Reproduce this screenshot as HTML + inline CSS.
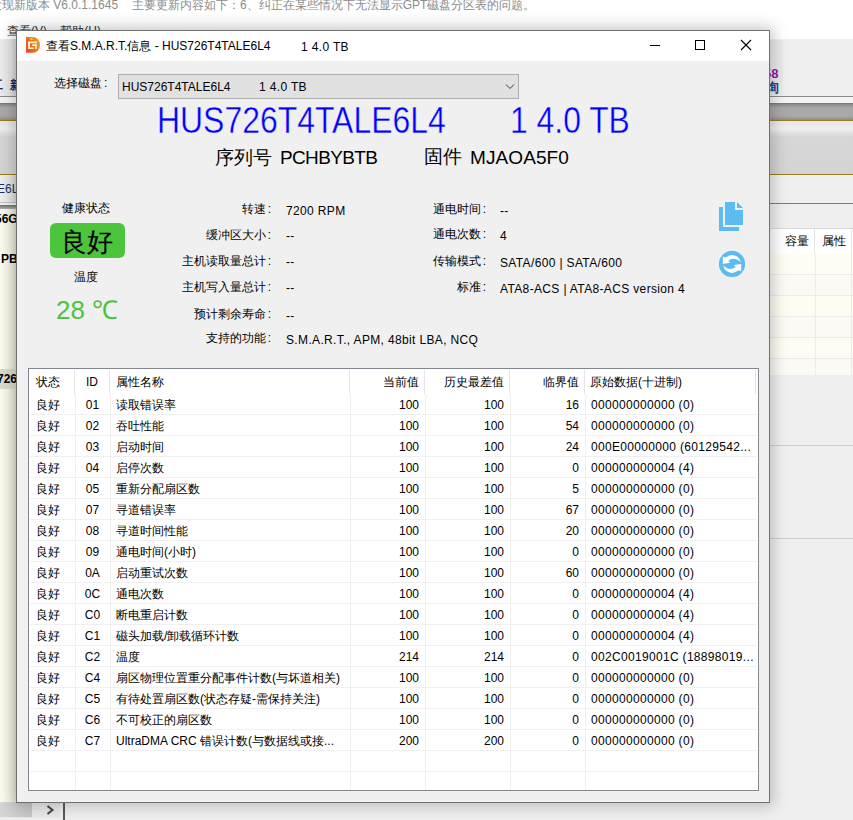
<!DOCTYPE html>
<html><head><meta charset="utf-8">
<style>
*{margin:0;padding:0;box-sizing:border-box}
html,body{width:853px;height:820px;overflow:hidden;background:#fff}
body{position:relative;font-family:"Liberation Sans",sans-serif;font-size:12px;color:#000}
.a{position:absolute}
.t{position:absolute;white-space:nowrap;line-height:1}
/* background window */
#topmsg,#topmsg2{top:-1px;color:#8c8c8c;font-size:12px}
#topgrad{left:0;top:12px;width:853px;height:27px;background:#fff}
#menu{left:7px;top:25px;font-size:12px;color:#333}
#tb{left:0;top:39px;width:853px;height:57px;background:#efefef}
.line{position:absolute;left:0;width:853px;height:1px}
#dialog{left:16px;top:30px;width:754px;height:773px;background:#f0f0f0;border:1px solid #6f6f6f;box-shadow:0 0 14px 3px rgba(0,0,0,0.22)}
#titlebar{left:0;top:0;width:752px;height:30px;background:#fff}
.L{letter-spacing:0.35px}
.co{margin-left:2px}
.lbl{position:absolute;white-space:nowrap;line-height:1;font-size:12px}
.r{position:absolute;left:0;width:729px;height:21px}
.r span{position:absolute;top:5px;white-space:nowrap;line-height:1}
.c0{left:7px}.c1{left:46px;width:35px;text-align:center}.c2{left:87px}
.c3{right:339px}.c4{right:254px}.c5{right:179px}.c6{left:562px;letter-spacing:0.32px}
.hl{position:absolute;left:1px;width:727px;height:1px;background:#f0f0f0}
.vl{position:absolute;width:1px;background:#f0f0f0}
.hs{position:absolute;top:1px;width:1px;height:24px;background:#e5e5e5}
.h span{position:absolute;top:7px;white-space:nowrap;line-height:1}
</style></head><body>

<!-- ===== background app ===== -->
<div class="a" id="topgrad"></div>
<div class="t" id="topmsg" style="left:-10px">发现新版本 V6.0.1.1645</div><div class="t" id="topmsg2" style="left:132px">主要更新内容如下：6、纠正在某些情况下无法显示GPT磁盘分区表的问题。</div>
<div class="t" id="menu">查看(V) &nbsp;&nbsp;&nbsp;帮助(H)</div>
<div class="a" id="tb"></div>
<div class="line" style="top:96px;background:#8a8a8a"></div>
<div class="a" style="left:0;top:97px;width:853px;height:6px;background:#f3f3f3"></div>
<div class="line" style="top:103px;background:#9a7d1e"></div>
<div class="a" style="left:0;top:104px;width:853px;height:16px;background:linear-gradient(#888,#a9a9a9 25%,#a9a9a9 75%,#8c8c8c)"></div>
<div class="line" style="top:120px;background:#9a7d1e"></div>
<div class="a" style="left:0;top:121px;width:853px;height:53px;background:linear-gradient(#e6e6e6,#f0f0f0 15%,#d6d6d6 30%,#d4d4d4)"></div>
<div class="line" style="top:174px;background:#9a7d1e"></div>
<div class="a" style="left:0;top:175px;width:853px;height:645px;background:#efefef"></div>
<div class="line" style="top:203px;background:#7a7a7a;height:1px"></div>
<!-- right list -->
<div class="line" style="top:228px;background:#dcdcdc"></div>
<div class="a" style="left:760px;top:229px;width:93px;height:25px;background:#fff"></div>
<div class="t" style="left:785px;top:235px">容量</div>
<div class="t" style="left:822px;top:235px">属性</div>
<div class="a" style="left:814px;top:229px;width:1px;height:25px;background:#e5e5e5"></div>
<div class="a" style="left:851px;top:229px;width:1px;height:25px;background:#e5e5e5"></div>
<div class="a" style="left:760px;top:254px;width:93px;height:21px;background:#fdfdf3"></div>
<div class="a" style="left:760px;top:275px;width:93px;height:21px;background:#fcfaf5"></div>
<div class="a" style="left:760px;top:296px;width:93px;height:21px;background:#fdfdf3"></div>
<div class="a" style="left:760px;top:317px;width:93px;height:21px;background:#fcfaf5"></div>
<div class="a" style="left:760px;top:338px;width:93px;height:21px;background:#fdfdf3"></div>
<div class="a" style="left:760px;top:359px;width:93px;height:16px;background:#fcfaf5"></div>
<div class="line" style="top:274px;left:760px;width:93px;background:#ececec"></div>
<div class="line" style="top:295px;left:760px;width:93px;background:#ececec"></div>
<div class="line" style="top:316px;left:760px;width:93px;background:#ececec"></div>
<div class="line" style="top:337px;left:760px;width:93px;background:#ececec"></div>
<div class="line" style="top:358px;left:760px;width:93px;background:#ececec"></div>
<div class="a" style="left:815px;top:254px;width:1px;height:121px;background:#ececec"></div>
<div class="a" style="left:851px;top:254px;width:1px;height:121px;background:#ececec"></div>
<div class="line" style="top:445px;background:#cfcfcf"></div>
<div class="line" style="top:538px;background:#cfcfcf"></div>
<!-- left panel -->
<div class="a" style="left:0;top:208px;width:16px;height:594px;background:linear-gradient(90deg,#fdfdf0,#f4f3e6 60%,#e4e2d4)"></div>

<!-- left strip details -->
<div class="a" style="left:0;top:39px;width:16px;height:57px;background:linear-gradient(90deg,#ececec,#e4e4e4 70%,#d4d4d4)"></div>
<div class="t" style="left:-9px;top:79px;font-weight:bold;color:#1c2a58;font-size:12px">工&nbsp;&nbsp;新</div>
<div class="a" style="left:0;top:175px;width:16px;height:27px;background:linear-gradient(90deg,#efefef,#e6e6e6 70%,#d8d8d8)"></div>
<div class="t" style="left:-3px;top:183px;color:#1e2e5a;font-size:12px">E6L4</div>
<div class="a" style="left:0;top:202px;width:16px;height:1px;background:#c4c4c4"></div>
<div class="a" style="left:0;top:203px;width:16px;height:2px;background:#f2f2f2"></div>
<div class="a" style="left:0;top:205px;width:16px;height:4px;background:linear-gradient(#6e6e6e,#b0b0b0)"></div>
<div class="t" style="left:-5px;top:213px;font-weight:bold;font-size:12px">56G</div>
<div class="t" style="left:1px;top:253px;font-weight:bold;font-size:12px">PB</div>
<div class="a" style="left:0;top:369px;width:16px;height:20px;background:#dedbcd"></div>
<div class="t" style="left:-3px;top:373px;font-weight:bold;font-size:12px">726</div>
<!-- bottom scrollbar -->
<div class="a" style="left:0;top:802px;width:60px;height:16px;background:#e8e8e8"></div>
<div class="a" style="left:0;top:802px;width:32px;height:15px;background:linear-gradient(90deg,#d6d6d6,#c6c6c6)"></div>
<svg class="a" style="left:46px;top:805px" width="9" height="10" viewBox="0 0 9 10"><path d="M1.5 1L6.5 5L1.5 9" stroke="#444" stroke-width="2" fill="none"/></svg>
<div class="a" style="left:63px;top:802px;width:2px;height:18px;background:#5a5a5a"></div>
<!-- right strip details -->
<div class="a" style="left:770px;top:40px;width:13px;height:55px;background:#e9e9e9"></div>
<div class="t" style="left:764px;top:67px;font-weight:bold;color:#9a0fb0;font-size:13px">58</div>
<div class="t" style="left:766px;top:81px;font-weight:bold;color:#14469a;font-size:13px">询</div>
<!-- ===== dialog ===== -->
<div class="a" id="dialog">
  <div class="a" id="titlebar"></div>
</div>


<!-- ===== dialog content (page coords) ===== -->
<!-- title -->
<svg class="a" style="left:26px;top:37px" width="15" height="16" viewBox="0 0 15 16">
 <defs><linearGradient id="ig" x1="1" y1="0" x2="0" y2="0.6"><stop offset="0" stop-color="#f9a51f"/><stop offset="1" stop-color="#ec4f1c"/></linearGradient></defs>
 <path d="M0 0H7A7 7.9 0 0 1 7 15.8H0Z" fill="url(#ig)"/>
 <circle cx="5.4" cy="1.9" r="1.2" fill="#ffd21a"/>
 <path d="M2.1 4.6H10.9V6.2H4V10.5H7.8V12.1H2.1Z" fill="#f6f7d9"/>
 <path d="M6.2 7.2H10.9V12.1H9.2V8.9H6.2Z" fill="#f6f7d9"/>
</svg>
<div class="t" style="left:46px;top:40px">查看S.M.A.R.T.信息 - HUS726T4TALE6L4</div>
<div class="t L" style="left:301px;top:41px">1 4.0 TB</div>
<div class="a" style="left:650px;top:45px;width:10px;height:1px;background:#000"></div>
<div class="a" style="left:695px;top:40px;width:10px;height:10px;border:1px solid #000"></div>
<svg class="a" style="left:740px;top:39px" width="12" height="12" viewBox="0 0 12 12"><path d="M1 1L11 11M11 1L1 11" stroke="#000" stroke-width="1.1"/></svg>

<div class="t" style="left:54px;top:77px">选择磁盘<span style="margin-left:2px">:</span></div>
<div class="a" style="left:118px;top:74px;width:401px;height:25px;background:#e1e1e1;border:1px solid #adadad"></div>
<div class="t" style="left:122px;top:81px">HUS726T4TALE6L4</div>
<div class="t L" style="left:259px;top:81px">1 4.0 TB</div>
<svg class="a" style="left:505px;top:83px" width="10" height="7" viewBox="0 0 10 7"><path d="M1 1.5L5 5.5L9 1.5" stroke="#3a3a3a" stroke-width="1" fill="none"/></svg>

<div class="t" id="big1" style="left:157px;top:103px;font-size:36px;color:#0000ff;-webkit-text-stroke:0.4px #f0f0f0;transform:scaleX(0.887);transform-origin:0 0">HUS726T4TALE6L4</div>
<div class="t" id="big2" style="left:510px;top:103px;font-size:36px;color:#0000ff;-webkit-text-stroke:0.4px #f0f0f0;transform:scaleX(0.885);transform-origin:0 0">1 4.0 TB</div>
<div class="t" style="left:215px;top:148px;font-size:19px">序列号</div>
<div class="t" style="left:280px;top:148px;font-size:19px;letter-spacing:-0.65px">PCHBYBTB</div>
<div class="t" style="left:424px;top:147px;font-size:19px">固件</div>
<div class="t" id="fw" style="left:470px;top:148px;font-size:19px;letter-spacing:0.1px">MJAOA5F0</div>

<!-- health -->
<div class="t" style="left:62px;top:202px">健康状态</div>
<div class="a" style="left:50px;top:223px;width:75px;height:35px;background:#4cc43c;border-radius:6px"></div>
<div class="t" style="left:61px;top:229px;font-size:26px;-webkit-text-stroke:0.15px #000">良好</div>
<div class="t" style="left:74px;top:271px">温度</div>
<div class="t" id="temp" style="left:56px;top:297px;font-size:26px;color:#4cc43c">28 ℃</div>

<!-- info labels -->
<div class="t" style="right:582px;top:203px">转速<span class="co">:</span></div>
<div class="t" style="right:582px;top:229px">缓冲区大小<span class="co">:</span></div>
<div class="t" style="right:582px;top:255px">主机读取量总计<span class="co">:</span></div>
<div class="t" style="right:582px;top:281px">主机写入量总计<span class="co">:</span></div>
<div class="t" style="right:582px;top:308px">预计剩余寿命<span class="co">:</span></div>
<div class="t" style="right:582px;top:332px">支持的功能<span class="co">:</span></div>
<div class="t L" style="left:286px;top:205px">7200 RPM</div>
<div class="t L" style="left:286px;top:230px">--</div>
<div class="t L" style="left:286px;top:256px">--</div>
<div class="t L" style="left:286px;top:282px">--</div>
<div class="t L" style="left:286px;top:310px">--</div>
<div class="t L" style="left:286px;top:334px">S.M.A.R.T., APM, 48bit LBA, NCQ</div>

<div class="t" style="right:367px;top:203px">通电时间<span class="co">:</span></div>
<div class="t" style="right:367px;top:228px">通电次数<span class="co">:</span></div>
<div class="t" style="right:367px;top:255px">传输模式<span class="co">:</span></div>
<div class="t" style="right:367px;top:281px">标准<span class="co">:</span></div>
<div class="t L" style="left:500px;top:205px">--</div>
<div class="t L" style="left:500px;top:230px">4</div>
<div class="t L" style="left:500px;top:257px">SATA/600 | SATA/600</div>
<div class="t L" style="left:500px;top:283px">ATA8-ACS | ATA8-ACS version 4</div>

<!-- icons -->
<svg class="a" style="left:719px;top:201px" width="25" height="31" viewBox="0 0 25 31">
 <path d="M0 6H4V26H20V30H0Z" fill="#5cbcf2"/>
 <path d="M6 1H16V9H24V24H6Z" fill="#5cbcf2"/>
 <path d="M18 1L24 7H18Z" fill="#5cbcf2"/>
</svg>
<svg class="a" style="left:718px;top:250px" width="28" height="28" viewBox="0 0 28 28">
 <circle cx="14" cy="13.9" r="13.1" fill="#5cbcf2"/>
 <path id="up" d="M22.8 12.6A8.9 8.9 0 0 0 7.7 7.6L4.8 6.5L4.8 13.9L12 12.8L10.3 10.5Q17 6.4 22.8 12.6Z" fill="#fff"/>
 <path d="M5.2 15.2A8.9 8.9 0 0 0 20.3 20.2L23.2 21.3L23.2 13.9L16 15L17.7 17.3Q11 21.4 5.2 15.2Z" fill="#fff"/>
</svg>

<!-- table -->
<div class="a" id="table" style="left:28px;top:368px;width:731px;height:423px;background:#fff;border:1px solid #828790">
 <div class="a h" style="left:0;top:0;width:729px;height:25px">
  <span style="left:7px">状态</span><span style="left:57px">ID</span><span style="left:87px">属性名称</span>
  <span style="right:339px">当前值</span><span style="right:254px">历史最差值</span><span style="right:179px">临界值</span><span style="left:561px">原始数据(十进制)</span>
 </div>
 <div class="hs" style="left:45px"></div><div class="hs" style="left:80px"></div><div class="hs" style="left:320px"></div>
 <div class="hs" style="left:395px"></div><div class="hs" style="left:480px"></div><div class="hs" style="left:555px"></div><div class="hs" style="left:726px"></div>
 <div class="vl" style="left:46px;top:25px;height:396px"></div>
 <div class="vl" style="left:81px;top:25px;height:396px"></div>
 <div class="vl" style="left:321px;top:25px;height:396px"></div>
 <div class="vl" style="left:396px;top:25px;height:396px"></div>
 <div class="vl" style="left:481px;top:25px;height:396px"></div>
 <div class="vl" style="left:556px;top:25px;height:396px"></div>
 <div class="hl" style="top:45px"></div>
<div class="hl" style="top:66px"></div>
<div class="hl" style="top:87px"></div>
<div class="hl" style="top:108px"></div>
<div class="hl" style="top:129px"></div>
<div class="hl" style="top:150px"></div>
<div class="hl" style="top:171px"></div>
<div class="hl" style="top:192px"></div>
<div class="hl" style="top:213px"></div>
<div class="hl" style="top:234px"></div>
<div class="hl" style="top:255px"></div>
<div class="hl" style="top:276px"></div>
<div class="hl" style="top:297px"></div>
<div class="hl" style="top:318px"></div>
<div class="hl" style="top:339px"></div>
<div class="hl" style="top:360px"></div>
<div class="hl" style="top:381px"></div>
<div class="hl" style="top:402px"></div>
 <div class="a" style="left:0;top:25px;width:729px;height:396px">
 <div class="r" style="top:0px"><span class="c0">良好</span><span class="c1">01</span><span class="c2">读取错误率</span><span class="c3">100</span><span class="c4">100</span><span class="c5">16</span><span class="c6">000000000000 (0)</span></div>
<div class="r" style="top:21px"><span class="c0">良好</span><span class="c1">02</span><span class="c2">吞吐性能</span><span class="c3">100</span><span class="c4">100</span><span class="c5">54</span><span class="c6">000000000000 (0)</span></div>
<div class="r" style="top:42px"><span class="c0">良好</span><span class="c1">03</span><span class="c2">启动时间</span><span class="c3">100</span><span class="c4">100</span><span class="c5">24</span><span class="c6">000E00000000 (60129542...</span></div>
<div class="r" style="top:63px"><span class="c0">良好</span><span class="c1">04</span><span class="c2">启停次数</span><span class="c3">100</span><span class="c4">100</span><span class="c5">0</span><span class="c6">000000000004 (4)</span></div>
<div class="r" style="top:84px"><span class="c0">良好</span><span class="c1">05</span><span class="c2">重新分配扇区数</span><span class="c3">100</span><span class="c4">100</span><span class="c5">5</span><span class="c6">000000000000 (0)</span></div>
<div class="r" style="top:105px"><span class="c0">良好</span><span class="c1">07</span><span class="c2">寻道错误率</span><span class="c3">100</span><span class="c4">100</span><span class="c5">67</span><span class="c6">000000000000 (0)</span></div>
<div class="r" style="top:126px"><span class="c0">良好</span><span class="c1">08</span><span class="c2">寻道时间性能</span><span class="c3">100</span><span class="c4">100</span><span class="c5">20</span><span class="c6">000000000000 (0)</span></div>
<div class="r" style="top:147px"><span class="c0">良好</span><span class="c1">09</span><span class="c2">通电时间(小时)</span><span class="c3">100</span><span class="c4">100</span><span class="c5">0</span><span class="c6">000000000000 (0)</span></div>
<div class="r" style="top:168px"><span class="c0">良好</span><span class="c1">0A</span><span class="c2">启动重试次数</span><span class="c3">100</span><span class="c4">100</span><span class="c5">60</span><span class="c6">000000000000 (0)</span></div>
<div class="r" style="top:189px"><span class="c0">良好</span><span class="c1">0C</span><span class="c2">通电次数</span><span class="c3">100</span><span class="c4">100</span><span class="c5">0</span><span class="c6">000000000004 (4)</span></div>
<div class="r" style="top:210px"><span class="c0">良好</span><span class="c1">C0</span><span class="c2">断电重启计数</span><span class="c3">100</span><span class="c4">100</span><span class="c5">0</span><span class="c6">000000000004 (4)</span></div>
<div class="r" style="top:231px"><span class="c0">良好</span><span class="c1">C1</span><span class="c2">磁头加载/卸载循环计数</span><span class="c3">100</span><span class="c4">100</span><span class="c5">0</span><span class="c6">000000000004 (4)</span></div>
<div class="r" style="top:252px"><span class="c0">良好</span><span class="c1">C2</span><span class="c2">温度</span><span class="c3">214</span><span class="c4">214</span><span class="c5">0</span><span class="c6">002C0019001C (18898019...</span></div>
<div class="r" style="top:273px"><span class="c0">良好</span><span class="c1">C4</span><span class="c2">扇区物理位置重分配事件计数(与坏道相关)</span><span class="c3">100</span><span class="c4">100</span><span class="c5">0</span><span class="c6">000000000000 (0)</span></div>
<div class="r" style="top:294px"><span class="c0">良好</span><span class="c1">C5</span><span class="c2">有待处置扇区数(状态存疑-需保持关注)</span><span class="c3">100</span><span class="c4">100</span><span class="c5">0</span><span class="c6">000000000000 (0)</span></div>
<div class="r" style="top:315px"><span class="c0">良好</span><span class="c1">C6</span><span class="c2">不可校正的扇区数</span><span class="c3">100</span><span class="c4">100</span><span class="c5">0</span><span class="c6">000000000000 (0)</span></div>
<div class="r" style="top:336px"><span class="c0">良好</span><span class="c1">C7</span><span class="c2">UltraDMA CRC 错误计数(与数据线或接...</span><span class="c3">200</span><span class="c4">200</span><span class="c5">0</span><span class="c6">000000000000 (0)</span></div>
 </div>
</div>

</body></html>
